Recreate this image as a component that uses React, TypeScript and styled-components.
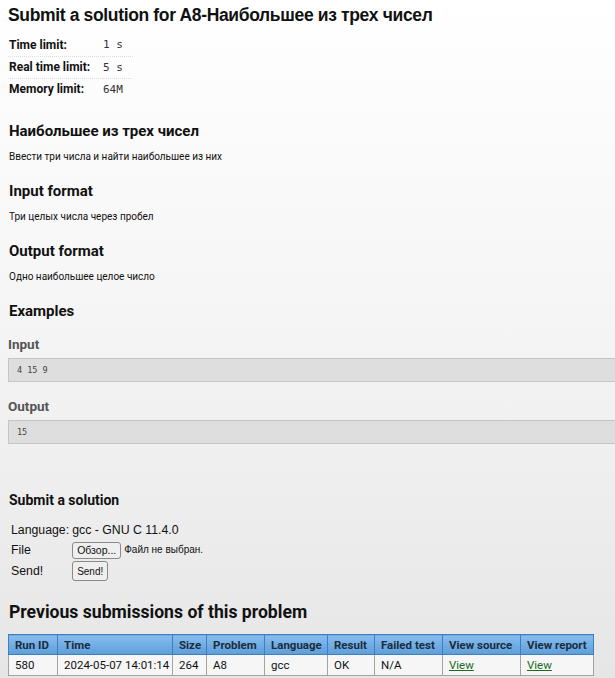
import styled, { createGlobalStyle } from "styled-components";

const GlobalStyle = createGlobalStyle`
    html, body {
        margin: 0;
        padding: 0;
        overflow-x: hidden;
    }
    body {
        min-height: 678px;
        background: linear-gradient(#ffffff 0px, #f5f5f5 320px, #e6e6e6 678px);
        font-family: Roboto, "Liberation Sans", sans-serif;
        color: #111;
    }
`;

const Page = styled.div`
    padding: 4px 0 8px 8px;
`;

const Title = styled.h2`
    margin: 0;
    font-family: "Liberation Sans", Arial, sans-serif;
    font-size: 17.5px;
    letter-spacing: -0.35px;
    line-height: 22px;
    font-weight: bold;
    color: #111;
`;

const Limits = styled.table`
    margin-top: 8px;
    border-collapse: collapse;
`;

const LimitRow = styled.tr`
    height: 22px;
    & + & td {
        border-top: 1px dotted #ddd;
    }
`;

const LimitName = styled.td`
    padding: 0 0 0 1px;
    width: 94px;
    font-size: 12px;
    font-weight: bold;
    color: #111;
`;

const LimitValue = styled.td`
    padding: 0 10px 0 0;
    font-family: "DejaVu Sans Mono", "Liberation Mono", monospace;
    font-size: 11px;
    color: #333;
`;

const Heading = styled.h3<{ $top?: number }>`
    margin: ${({ $top }) => $top ?? 19}px 0 0 1px;
    font-size: 15px;
    line-height: 18px;
    font-weight: bold;
    color: #111;
`;

const Text = styled.p`
    margin: 10px 0 0 1px;
    font-size: 10px;
    line-height: 13px;
    color: #111;
`;

const SampleLabel = styled.h4<{ $top: number }>`
    margin: ${({ $top }) => $top}px 0 0 0;
    font-size: 13.5px;
    line-height: 16px;
    font-weight: bold;
    color: #555;
`;

const SampleBox = styled.pre`
    margin: 6px -30px 0 0;
    height: 24px;
    box-sizing: border-box;
    padding: 0 8px;
    display: flex;
    align-items: center;
    background: #dedede;
    border: 1px solid #c6c6c6;
    font-family: "DejaVu Sans Mono", "Liberation Mono", monospace;
    font-size: 8.5px;
    color: #444;
`;

const SubmitHeading = styled.h3`
    margin: 48px 0 0 1px;
    font-size: 14px;
    line-height: 17px;
    font-weight: bold;
    color: #111;
`;

const Form = styled.table`
    margin-top: 11px;
    border-collapse: collapse;
    font-family: "Liberation Sans", Arial, sans-serif;
    font-size: 12.3px;
    color: #111;
`;

const FormRow = styled.tr<{ $h: number }>`
    height: ${({ $h }) => $h}px;
`;

const FormLabel = styled.td`
    padding: 0 0 0 3px;
    width: 58px;
    vertical-align: middle;
`;

const FormValue = styled.td`
    padding: 0 0 0 3px;
    vertical-align: middle;
`;

const FileHint = styled.span`
    margin-left: 3px;
    font-size: 10px;
`;

const Button = styled.button<{ $h: number; $fs: number }>`
    height: ${({ $h }) => $h}px;
    padding: 0 4px;
    font-family: "Liberation Sans", Arial, sans-serif;
    font-size: ${({ $fs }) => $fs}px;
    color: #111;
    background: #efefef;
    border: 1px solid #8a8a8a;
    border-radius: 3px;
    vertical-align: middle;
`;

const PrevHeading = styled.h2`
    margin: 20px 0 0 1px;
    font-size: 17.6px;
    line-height: 21px;
    font-weight: bold;
    color: #111;
`;

const Runs = styled.table`
    margin-top: 11px;
    border-collapse: collapse;
    font-size: 11.5px;
`;

const HeadCell = styled.th<{ $w: number }>`
    width: ${({ $w }) => $w}px;
    height: 20px;
    box-sizing: border-box;
    padding: 0 0 0 6px;
    text-align: left;
    font-weight: bold;
    color: #1c2c3c;
    background: linear-gradient(#86bdee, #5e9ed9);
    border: 1px solid #3f7fc0;
    white-space: nowrap;
`;

const Cell = styled.td`
    height: 21px;
    box-sizing: border-box;
    padding: 0 0 0 6px;
    background: #f6f6f6;
    border: 1px solid #a3a3a3;
    color: #111;
    white-space: nowrap;
`;

const ViewLink = styled.a`
    color: #1b6b1b;
    text-decoration: underline;
`;

const columns: [string, number][] = [
    ["Run ID", 49],
    ["Time", 115],
    ["Size", 34],
    ["Problem", 58],
    ["Language", 63],
    ["Result", 47],
    ["Failed test", 68],
    ["View source", 78],
    ["View report", 73],
];

export default function App() {
    return (
        <>
            <GlobalStyle />
            <Page>
                <Title>Submit a solution for A8-Наибольшее из трех чисел</Title>
                <Limits>
                    <tbody>
                        <LimitRow><LimitName>Time limit:</LimitName><LimitValue>1 s</LimitValue></LimitRow>
                        <LimitRow><LimitName>Real time limit:</LimitName><LimitValue>5 s</LimitValue></LimitRow>
                        <LimitRow><LimitName>Memory limit:</LimitName><LimitValue>64M</LimitValue></LimitRow>
                    </tbody>
                </Limits>

                <Heading $top={22}>Наибольшее из трех чисел</Heading>
                <Text>Ввести три числа и найти наибольшее из них</Text>
                <Heading>Input format</Heading>
                <Text>Три целых числа через пробел</Text>
                <Heading>Output format</Heading>
                <Text>Одно наибольшее целое число</Text>
                <Heading>Examples</Heading>

                <SampleLabel $top={16}>Input</SampleLabel>
                <SampleBox>4 15 9</SampleBox>
                <SampleLabel $top={16}>Output</SampleLabel>
                <SampleBox>15</SampleBox>

                <SubmitHeading>Submit a solution</SubmitHeading>
                <Form>
                    <tbody>
                        <FormRow $h={20}>
                            <FormLabel>Language:</FormLabel>
                            <FormValue>gcc - GNU C 11.4.0</FormValue>
                        </FormRow>
                        <FormRow $h={20}>
                            <FormLabel>File</FormLabel>
                            <FormValue>
                                <Button $h={17} $fs={10.5}>Обзор...</Button>
                                <FileHint>Файл не выбран.</FileHint>
                            </FormValue>
                        </FormRow>
                        <FormRow $h={22}>
                            <FormLabel>Send!</FormLabel>
                            <FormValue>
                                <Button $h={20} $fs={10}>Send!</Button>
                            </FormValue>
                        </FormRow>
                    </tbody>
                </Form>

                <PrevHeading>Previous submissions of this problem</PrevHeading>
                <Runs>
                    <thead>
                        <tr>
                            {columns.map(([name, w]) => (
                                <HeadCell key={name} $w={w}>{name}</HeadCell>
                            ))}
                        </tr>
                    </thead>
                    <tbody>
                        <tr>
                            <Cell>580</Cell>
                            <Cell>2024-05-07 14:01:14</Cell>
                            <Cell>264</Cell>
                            <Cell>A8</Cell>
                            <Cell>gcc</Cell>
                            <Cell>OK</Cell>
                            <Cell>N/A</Cell>
                            <Cell><ViewLink href="#">View</ViewLink></Cell>
                            <Cell><ViewLink href="#">View</ViewLink></Cell>
                        </tr>
                    </tbody>
                </Runs>
            </Page>
        </>
    );
}
